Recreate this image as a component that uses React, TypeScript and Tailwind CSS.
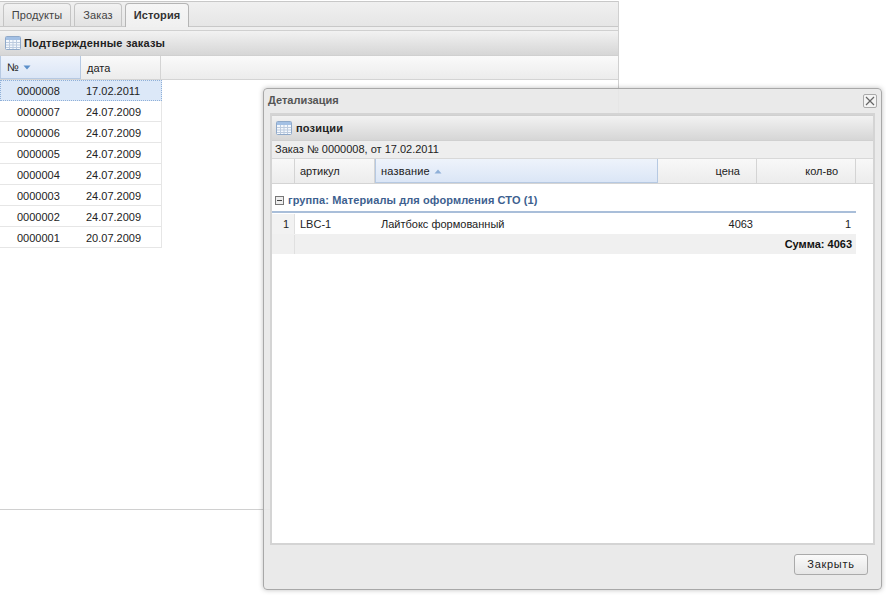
const orders = [
  ["0000008", "17.02.2011"],
  ["0000007", "24.07.2009"],
  ["0000006", "24.07.2009"],
  ["0000005", "24.07.2009"],
  ["0000004", "24.07.2009"],
  ["0000003", "24.07.2009"],
  ["0000002", "24.07.2009"],
  ["0000001", "20.07.2009"],
];

// small calendar/table icon used in panel headers
const TableIcon = () => (
  <svg width="16" height="14" viewBox="0 0 16 14" className="shrink-0">
    <rect x="0.5" y="0.5" width="15" height="13" rx="1" fill="#f4f8fd" stroke="#8fa9c9" />
    <rect x="1" y="1" width="14" height="3" fill="#a3c0e4" />
    <path d="M1 6.5H15M1 9H15M1 11.5H15M4.5 4V13M8 4V13M11.5 4V13" stroke="#bccbdf" strokeWidth="1" fill="none" />
  </svg>
);

const Tab = ({ label, active = false }: { label: string; active?: boolean }) => (
  <div
    className={
      active
        ? "h-[24px] w-[64px] -mb-px flex items-center justify-center rounded-t-[4px] border border-b-0 border-[#b5b5b5] bg-gradient-to-b from-[#f6f6f6] to-[#f0f0f0] font-bold tracking-[0.1px] text-[#333]"
        : "h-[23px] flex items-center justify-center rounded-t-[4px] border border-b-0 border-[#c4c4c4] bg-gradient-to-b from-[#f2f2f2] to-[#e2e2e2] tracking-[0.1px] text-[#444] first:w-[68px] w-[48px]"
    }
  >
    {label}
  </div>
);

const PanelHeader = ({ title, inner = false }: { title: string; inner?: boolean }) => (
  <div
    className={`h-[26px] shrink-0 flex items-center font-bold tracking-[0.2px] text-[#222] bg-gradient-to-b from-[#f2f2f2] to-[#d6d6d6] border-y border-[#d0d0d0] ${
      inner ? "pl-[4px] gap-[4px]" : "pl-[5px] gap-[3px]"
    }`}
  >
    <TableIcon />
    <span className="pt-px">{title}</span>
  </div>
);

const HeadCell = ({ label, w, right = false }: { label: string; w: string; right?: boolean }) => (
  <div className={`${w} shrink-0 h-full flex items-center border-r border-[#d4d4d4] ${right ? "justify-end pr-[16px]" : "pl-[5px]"}`}>
    {label}
  </div>
);

export default function App() {
  return (
    <div className="relative w-[886px] h-[597px] overflow-hidden bg-white text-[11px] leading-none text-[#222] font-['Liberation_Sans',Arial,sans-serif]">
      {/* background panel */}
      <div className="w-[619px] h-[509px] border-r border-b border-[#d0d0d0]">
        <div className="h-[29px] mt-px flex flex-col border-t border-[#c8c8c8] bg-gradient-to-b from-[#f0f0f0] to-[#e4e4e4]">
          <div className="h-[25px] shrink-0 flex items-end gap-[3px] pl-[3px] border-b border-[#c8c8c8]">
            <Tab label="Продукты" />
            <Tab label="Заказ" />
            <Tab label="История" active />
          </div>
          <div className="flex-1 bg-[#efefef]" />
        </div>
        <PanelHeader title="Подтвержденные заказы" />
        <div className="h-[24px] flex items-center border-b border-[#d4d4d4] bg-gradient-to-b from-[#fafafa] to-[#ececec]">
          <div className="w-[81px] h-full flex items-center gap-[4px] pl-[6px] pt-px bg-gradient-to-b from-[#eef3fb] to-[#dbe6f6] border-x border-b border-[#b6c9e2]">
            <span>№</span>
            <svg width="8" height="5" viewBox="0 0 8 5">
              <path d="M0.5 0.5H7.5L4 4.5Z" fill="#5b8fc9" />
            </svg>
          </div>
          <div className="w-[80px] h-full flex items-center pl-[6px] pt-px border-r border-[#d4d4d4]">дата</div>
        </div>
        <div className="w-[162px]">
          {orders.map(([no, date], i) => (
            <div
              key={no}
              className={
                i === 0
                  ? "h-[21px] pt-[2px] flex items-center bg-[#dce8f8] outline-1 -outline-offset-1 outline-dotted outline-[#8fb0d8]"
                  : "h-[21px] pt-[2px] flex items-center border-b border-r border-[#e6e6e6]"
              }
            >
              <div className="w-[81px] pl-[17px]">{no}</div>
              <div className="pl-[5px]">{date}</div>
            </div>
          ))}
        </div>
      </div>

      {/* dialog window */}
      <div className="absolute left-[263px] top-[88px] w-[619px] h-[502px] flex flex-col rounded-[4px] border border-[#a8a8a8] bg-[#e8e8e8]/90 shadow-[0_0_5px_rgba(0,0,0,0.25)]">
        <div className="h-[24px] shrink-0 flex items-center justify-between pl-[4px] pr-[4px] font-bold text-[#555]">
          <span className="pb-[2px]">Детализация</span>
          <div className="w-[14px] h-[14px] flex items-center justify-center rounded-[2px] border border-[#aaa] bg-[#f4f4f4]">
            <svg width="10" height="10" viewBox="0 0 10 10">
              <path d="M1 1L9 9M9 1L1 9" stroke="#666" strokeWidth="1.2" />
            </svg>
          </div>
        </div>
        <div className="mx-[6px] flex-1 flex flex-col border-2 border-[#d4d4d4] bg-white">
          <PanelHeader title="позиции" inner />
          <div className="h-[18px] shrink-0 flex items-center pl-[3px] bg-[#eeeeee] border-b border-[#d8d8d8] text-[#222]">
            Заказ № 0000008, от 17.02.2011
          </div>
          <div className="h-[25px] shrink-0 flex items-center border-b border-[#d4d4d4] bg-gradient-to-b from-[#f8f8f8] to-[#ececec]">
            <HeadCell label="" w="w-[23px]" />
            <HeadCell label="артикул" w="w-[80px]" />
            <div className="w-[283px] shrink-0 h-full flex items-center gap-[4px] pl-[5px] pt-[2px] bg-gradient-to-b from-[#eef3fb] to-[#dbe6f6] border-x border-b border-[#b6c9e2]">
              <span className="tracking-[0.2px]">название</span>
              <svg width="8" height="5" viewBox="0 0 8 5">
                <path d="M0.5 4.5H7.5L4 0.5Z" fill="#8fb0d8" />
              </svg>
            </div>
            <HeadCell label="цена" w="w-[99px]" right />
            <div className="w-[99px] shrink-0 h-full flex items-center justify-end pr-[17px] border-r border-[#d4d4d4]">кол-во</div>
          </div>
          <div className="pt-[9px] w-[584px]">
            <div className="h-[20px] flex items-center gap-[4px] pl-[3px] border-b-2 border-[#a9bed9] pb-[4px] font-bold tracking-[0.1px] text-[#3d5f8f]">
              <span className="w-[9px] h-[9px] flex items-center justify-center border border-[#777] bg-[#eee]">
                <span className="w-[5px] h-px bg-[#444]" />
              </span>
              <span>группа: Материалы для оформления СТО (1)</span>
            </div>
            <div className="h-[21px] pt-px flex items-center">
              <div className="w-[23px] h-full flex items-center justify-end pr-[5px] bg-[#f2f2f2] border-r border-[#e0e0e0]">1</div>
              <div className="w-[80px] pl-[5px]">LBC-1</div>
              <div className="w-[283px] pl-[6px]">Лайтбокс формованный</div>
              <div className="w-[99px] text-right pr-[4px]">4063</div>
              <div className="w-[99px] text-right pr-[5px]">1</div>
            </div>
            <div className="h-[20px] pt-px flex items-center bg-[#f0f0f0]">
              <div className="w-[23px] h-full border-r border-[#e0e0e0]" />
              <div className="flex-1 text-right pr-[4px] font-bold text-[#111]">Сумма: 4063</div>
            </div>
          </div>
        </div>
        <div className="h-[44px] shrink-0 flex items-center justify-end pr-[13px] pb-[5px]">
          <div className="w-[74px] h-[21px] flex items-center justify-center rounded-[3px] border border-[#aaa] bg-gradient-to-b from-[#fafafa] to-[#e6e6e6] tracking-[0.7px] text-[#222]">
            Закрыть
          </div>
        </div>
      </div>
    </div>
  );
}
